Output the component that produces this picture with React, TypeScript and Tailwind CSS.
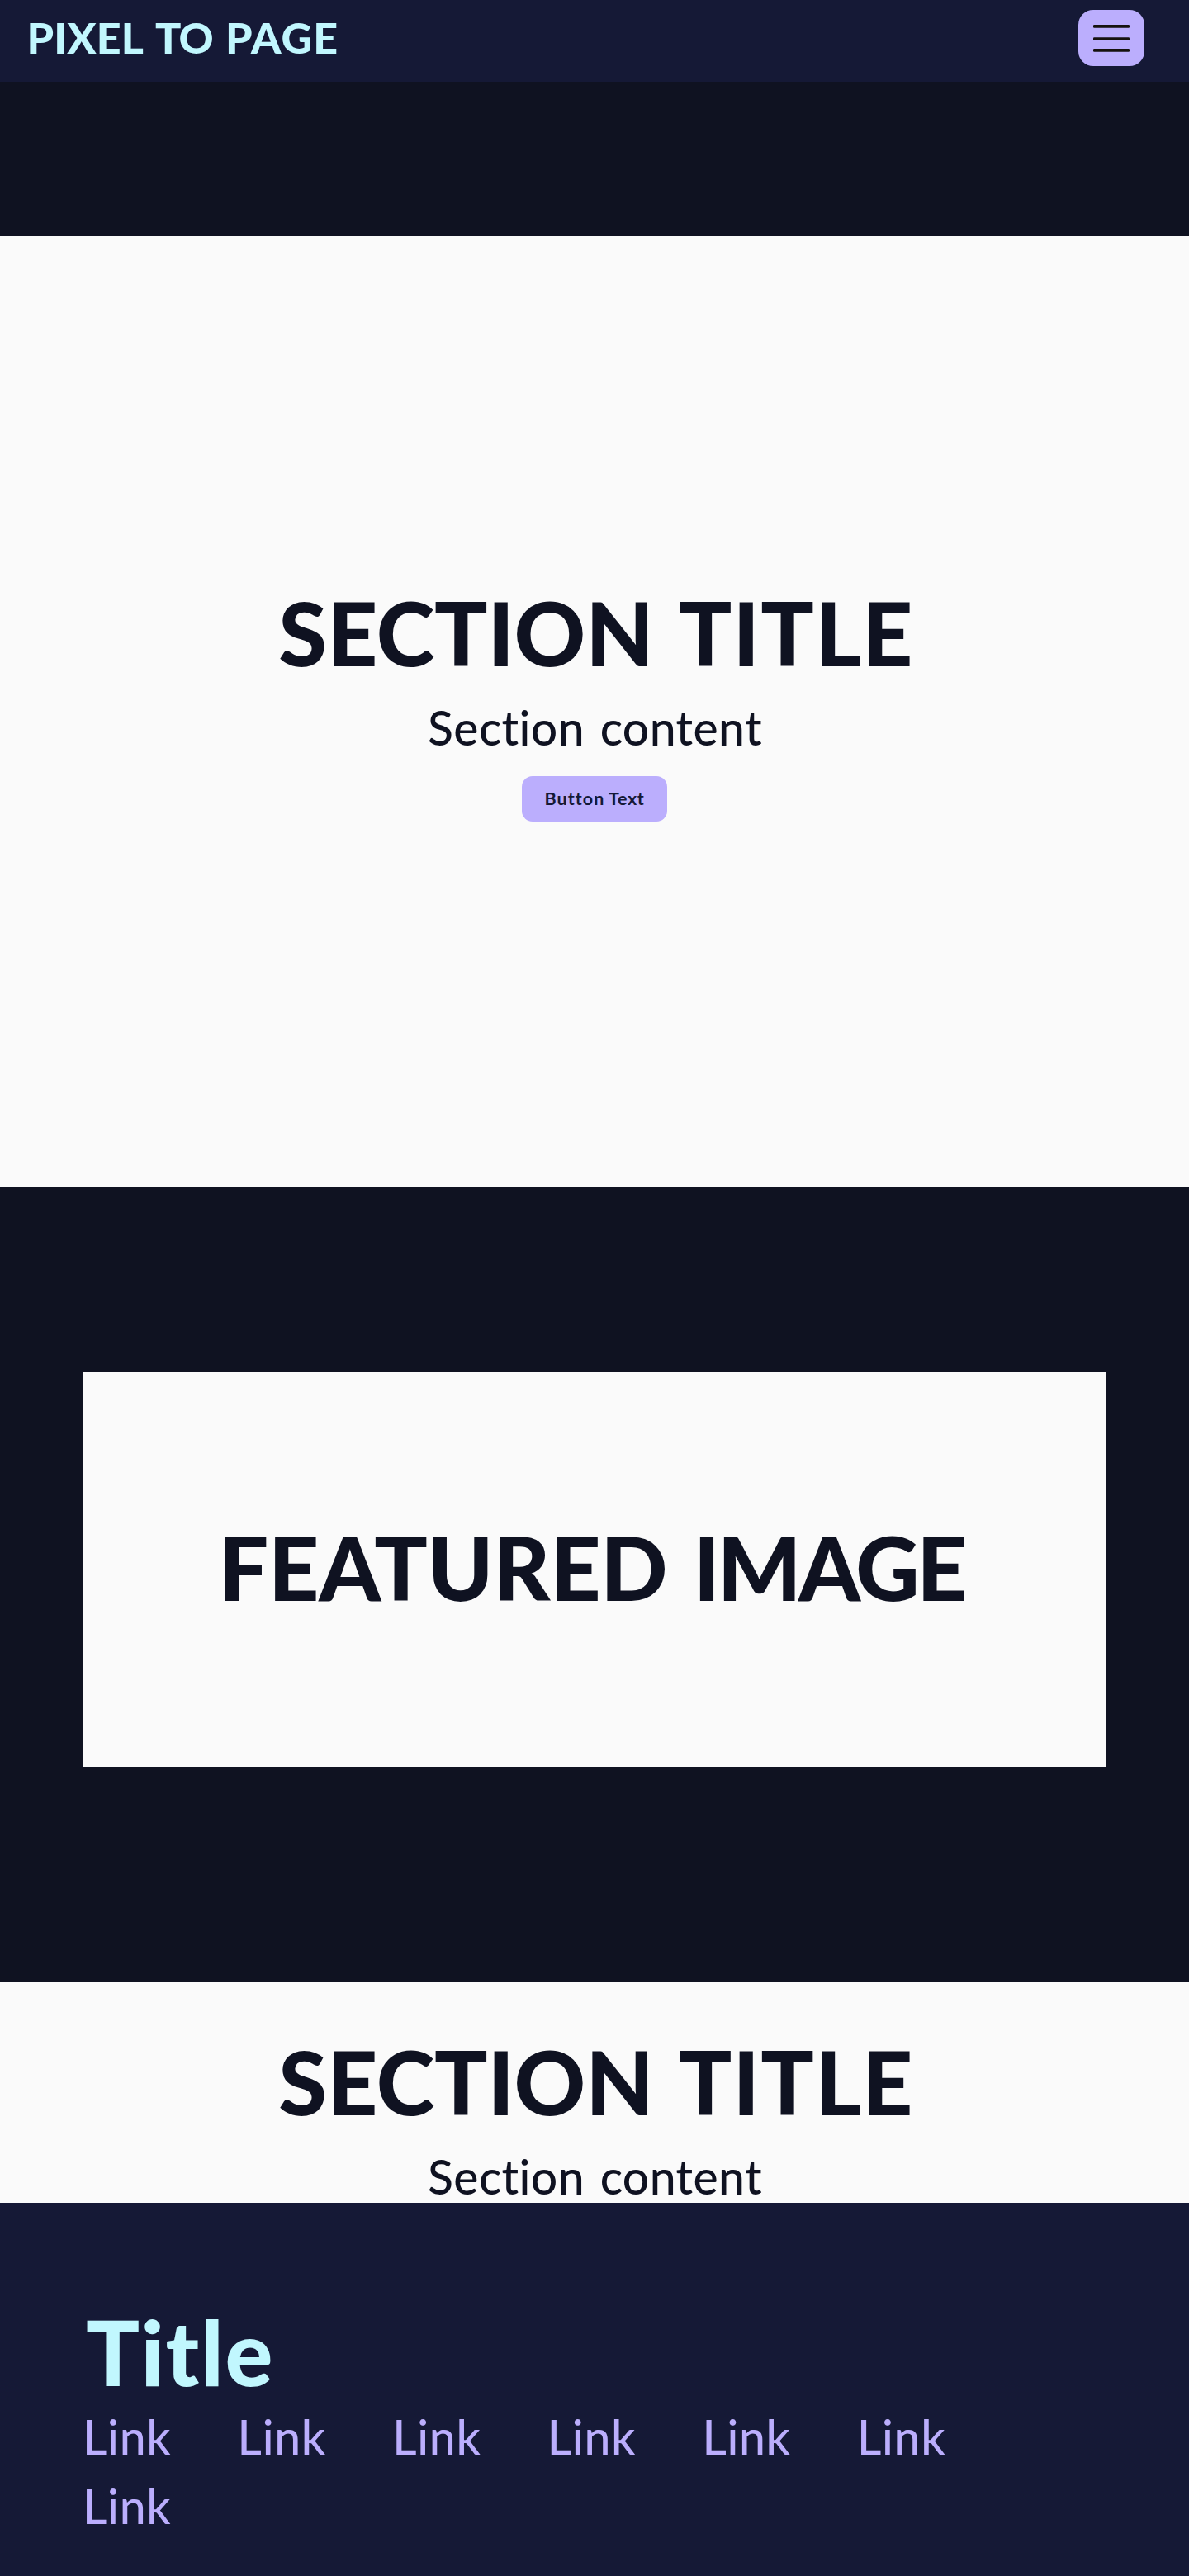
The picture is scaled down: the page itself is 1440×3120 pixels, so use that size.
type Word = { text: string; className?: string };

function Words({ words, className }: { words: Word[]; className: string }) {
  return (
    <span className={`flex whitespace-nowrap ${className}`}>
      {words.map((w) => (
        <span key={w.text} className={w.className}>
          {w.text}
        </span>
      ))}
    </span>
  );
}

function SectionText() {
  return (
    <>
      <h2 className="flex justify-center pl-1 text-[107px] leading-[107px] font-black">
        <Words
          className="gap-[30px]"
          words={[
            { text: "SECTION", className: "tracking-[-0.2px]" },
            { text: "TITLE", className: "tracking-[1.2px]" },
          ]}
        />
      </h2>
      <p className="mt-[34px] flex justify-center pl-px text-[57px] leading-[57px] font-medium">
        <Words
          className="gap-[18.7px] tracking-[0.4px]"
          words={[{ text: "Section" }, { text: "content" }]}
        />
      </p>
    </>
  );
}

function Header() {
  return (
    <header className="flex h-[99px] items-start justify-between bg-[#151936] pr-[54px] pl-[32.4px]">
      <h1 className="pt-[19px] text-[52px] leading-[52px] font-black text-[#c1f7fe]">
        <Words
          className=""
          words={[
            { text: "PIXEL", className: "mr-[13.8px] tracking-[0.2px]" },
            { text: "TO", className: "mr-[15.8px] tracking-[-1.6px]" },
            { text: "PAGE", className: "tracking-[1.07px]" },
          ]}
        />
      </h1>
      <button
        aria-label="Menu"
        className="mt-3 flex h-[68px] w-20 justify-center rounded-[18px] bg-[#bbaefd] pt-[18px]"
      >
        <svg width="44" height="34" viewBox="0 0 44 34" fill="#16120f">
          <rect x="0" y="0" width="44" height="3.7" rx="1.2" />
          <rect x="0" y="15.2" width="44" height="3.7" rx="1.2" />
          <rect x="0" y="29" width="44" height="3.7" rx="1.2" />
        </svg>
      </button>
    </header>
  );
}

function Footer() {
  const links = ["Link", "Link", "Link", "Link", "Link", "Link", "Link"];
  return (
    <footer className="h-[452px] bg-[#151936] pt-[126px] pl-[100px]">
      <h2 className="pl-1 text-[108px] leading-[108px] font-black tracking-[1.9px] text-[#c1f7fe]">
        Title
      </h2>
      <nav className="mt-[7px] flex w-[1200px] flex-wrap text-[57px] leading-[84px] font-medium tracking-[0.7px] text-[#bbaefd]">
        {links.map((label, i) => (
          <a key={i} className="w-[187.6px]">
            {label}
          </a>
        ))}
      </nav>
    </footer>
  );
}

export default function App() {
  return (
    <div className="flex h-[3120px] w-[1440px] flex-col overflow-hidden bg-[#0f1221] font-['Lato',sans-serif] text-[#0f1221]">
      <Header />
      <section className="mt-[187px] h-[1152px] bg-[#fafafa] pt-[426px]">
        <SectionText />
        <div className="mt-[30px] flex justify-center">
          <button className="flex h-[55px] w-44 justify-center rounded-[13px] bg-[#bbaefd] pt-4 text-[21.5px] leading-[22px] font-bold text-[#151936]">
            <Words
              className="gap-[4.4px]"
              words={[
                { text: "Button", className: "tracking-[1.1px]" },
                { text: "Text", className: "tracking-[0.7px]" },
              ]}
            />
          </button>
        </div>
      </section>
      <section className="h-[962px] px-[101px] pt-[224px]">
        <div className="flex h-[478px] justify-center bg-[#fafafa] pt-[182px] pr-[7px] text-[107px] leading-[107px] font-black">
          <Words
            className="gap-[31.3px]"
            words={[
              { text: "FEATURED", className: "tracking-[-0.33px]" },
              { text: "IMAGE", className: "tracking-[-3.5px]" },
            ]}
          />
        </div>
      </section>
      <section className="h-[268px] bg-[#fafafa] pt-[67px]">
        <SectionText />
      </section>
      <Footer />
    </div>
  );
}
